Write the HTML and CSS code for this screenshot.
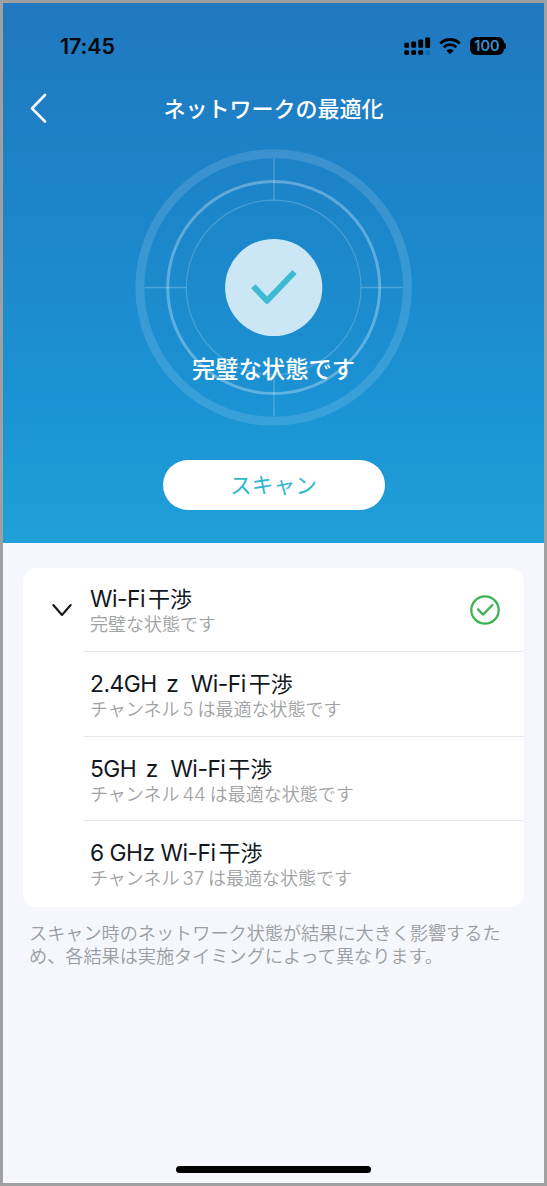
FILE: index.html
```html
<!DOCTYPE html>
<html lang="ja">
<head>
<meta charset="utf-8">
<meta name="viewport" content="width=device-width, initial-scale=1">
<title>ネットワークの最適化</title>
<link rel="stylesheet" href="styles.css">
</head>
<body>
<main class="screen">
  <section class="hero">
    <div class="statusbar">
      <span class="time">17:45</span>
      <div class="indicators">
        <svg class="signal" width="27" height="19" viewBox="0 0 27 19">
          <rect x="0.3" y="5.8" width="4.8" height="5" rx="1.2"/>
          <rect x="7.3" y="4.4" width="4.8" height="6.4" rx="1.2"/>
          <rect x="14.3" y="2.4" width="4.8" height="8.4" rx="1.2"/>
          <rect x="21.3" y="0.4" width="4.8" height="10.6" rx="1.2"/>
          <rect x="0.3" y="13.2" width="4.8" height="4.8" rx="1.4"/>
          <rect x="7.3" y="13.2" width="4.8" height="4.8" rx="1.4"/>
          <rect x="14.3" y="13.2" width="4.8" height="4.8" rx="1.4"/>
          <rect class="signal-off" x="21.3" y="13.2" width="4.8" height="4.8" rx="1.4"/>
        </svg>
        <svg class="wifi" width="22" height="18" viewBox="0 0 22 18">
          <path class="wifi-arc" d="M1.300 6.400A14 14 0 0 1 20.700 6.400M4.700 10.200A9.200 9.200 0 0 1 17.300 10.200"/>
          <path d="M11 17.200L7.300 13.400Q11 10.400 14.700 13.400Z"/>
        </svg>
        <div class="battery"><span class="level">100</span><span class="tip"></span></div>
      </div>
    </div>
    <header class="titlebar">
      <svg class="back" width="18" height="30" viewBox="0 0 18 30"><path d="M15 2L2 15.300L15 28.500"/></svg>
      <h1 class="title">ネットワークの最適化</h1>
    </header>
    <div class="radar">
      <svg class="rings" width="278" height="278" viewBox="0.3 0.5 278 278">
        <circle class="ring-outer" cx="139" cy="139" r="133.8"/>
        <circle class="ring-middle" cx="139" cy="139" r="106"/>
        <circle class="ring-inner" cx="139" cy="139" r="87.3"/>
        <path class="axis-v" d="M139.300 10V52M139.300 226V268"/>
        <path class="axis-h" d="M10 139H51.500M226.500 139H268"/>
        <circle class="disc" cx="139" cy="139" r="48.600"/>
        <path class="disc-check" d="M118.700 137.800L132.300 152.300L159.800 123.500"/>
      </svg>
      <p class="state">完璧な状態です</p>
    </div>
    <button class="scan" type="button">スキャン</button>
  </section>
  <section class="card">
    <div class="row row-head">
      <svg class="chevron" width="20" height="14" viewBox="0 0 20 14"><path d="M1.300 2L10 12L18.700 2"/></svg>
      <div class="body">
        <div class="name"><span>Wi-Fi</span><span class="kanji">干渉</span></div>
        <div class="detail">完璧な状態です</div>
      </div>
      <svg class="ok" width="30" height="30" viewBox="0 0 30 30"><circle cx="15" cy="15" r="13.700"/><path d="M8 14.400L13 19.600L22.400 10"/></svg>
    </div>
    <div class="row">
      <div class="body">
        <div class="name"><span>2.4GH</span><span class="unit">z</span><span>Wi-Fi</span><span class="kanji">干渉</span></div>
        <div class="detail">チャンネル<span class="num">5</span>は最適な状態です</div>
      </div>
    </div>
    <div class="row">
      <div class="body">
        <div class="name"><span>5GH</span><span class="unit">z</span><span>Wi-Fi</span><span class="kanji">干渉</span></div>
        <div class="detail">チャンネル<span class="num">44</span>は最適な状態です</div>
      </div>
    </div>
    <div class="row">
      <div class="body">
        <div class="name"><span>6 GHz Wi-Fi</span><span class="kanji">干渉</span></div>
        <div class="detail">チャンネル<span class="num">37</span>は最適な状態です</div>
      </div>
    </div>
  </section>
  <p class="note">スキャン時のネットワーク状態が結果に大きく影響するため、各結果は実施タイミングによって異なります。</p>
  <div class="home"></div>
</main>
</body>
</html>
```
FILE: styles.css
```css
* { box-sizing: border-box; margin: 0; padding: 0; }
body {
  font-family: Inter, "Noto Sans CJK JP", sans-serif;
  background: #f5f7fb;
}
svg { display: block; fill: none; flex: none; }
.screen {
  width: 547px;
  height: 1186px;
  border: 3px solid #a0a0a0;
  background: #f5f7fc;
  display: flex;
  flex-direction: column;
  overflow: hidden;
}
.hero {
  height: 540px;
  flex: none;
  display: flex;
  flex-direction: column;
  align-items: center;
  background: linear-gradient(#2078c0, #1c86ca 40%, #1b93d4 75%, #20a0d9);
}
.statusbar {
  width: 100%;
  height: 86px;
  padding: 0 38px 0 57px;
  display: flex;
  align-items: center;
  justify-content: space-between;
}
.time { font-size: 21.5px; font-weight: 600; letter-spacing: -0.1px; color: #05080c; }
.indicators { display: flex; align-items: center; height: 19px; }
.signal, .wifi { fill: #000; }
.signal-off { fill: #0869b5; }
.wifi { margin: 0 9px 0 8px; }
.wifi-arc { fill: none; stroke: #000; stroke-width: 2.8; }
.battery { display: flex; align-items: center; gap: 0; }
.level {
  width: 34px;
  height: 18px;
  border-radius: 6px;
  background: #000;
  color: #3a8fd0;
  font-size: 14.5px;
  font-weight: 600;
  line-height: 18px;
  text-align: center;
}
.tip { width: 2px; height: 6px; border-radius: 0 3px 3px 0; background: #000; }
.titlebar {
  width: 100%;
  height: 38px;
  display: grid;
  grid-template-columns: 46px 1fr 46px;
  align-items: center;
}
.back { margin-left: 27px; stroke: #fff; stroke-width: 2.6; stroke-linecap: round; stroke-linejoin: round; }
.title {
  font: 500 22px/32px "Noto Sans CJK JP", sans-serif;
  color: #fff;
  text-align: center;
  padding-bottom: 3px;
}
.radar { display: grid; width: 278px; height: 278px; margin-top: 22px; }
.rings, .state { grid-area: 1 / 1; }
.ring-outer { stroke: rgba(255, 255, 255, .13); stroke-width: 9; }
.ring-middle { stroke: rgba(255, 255, 255, .3); stroke-width: 3; }
.ring-inner { stroke: rgba(255, 255, 255, .2); stroke-width: 1.2; }
.axis-v { stroke: rgba(255, 255, 255, .15); stroke-width: 2; }
.axis-h { stroke: rgba(255, 255, 255, .22); stroke-width: 1.4; }
.disc { fill: #cbe7f5; }
.disc-check { stroke: #3ebbd3; stroke-width: 6; stroke-linejoin: round; }
.state {
  font: 500 23.3px/34px "Noto Sans CJK JP", sans-serif;
  color: #fff;
  text-align: center;
  padding-top: 202px;
}
.scan {
  width: 222px;
  height: 50px;
  margin-top: 32.5px;
  border: 0;
  border-radius: 25px;
  background: #fff;
  color: #31b6cf;
  font: 400 21.7px/48px "Noto Sans CJK JP", sans-serif;
  padding-bottom: 2px;
}
.card {
  width: 501px;
  height: 339px;
  flex: none;
  margin: 25px 0 0 20px;
  border-radius: 14px;
  background: #fff;
  display: grid;
  grid-template-rows: 84px 85px 84px 86px;
}
.row { display: grid; grid-template-columns: 61px 1fr 54px; align-items: center; }
.body {
  grid-column: 2 / 4;
  grid-row: 1;
  align-self: stretch;
  border-bottom: 1px solid #e6e7e9;
  padding: 16px 0 0 6px;
}
.row-head .body { padding-top: 15px; }
.row:last-child .body { border-bottom: 0; }
.chevron { grid-row: 1; margin-left: 29px; stroke: #12181e; stroke-width: 2.1; stroke-linecap: round; stroke-linejoin: round; }
.ok { grid-column: 3; grid-row: 1; stroke: #3cb454; stroke-width: 2.3; stroke-linecap: round; stroke-linejoin: round; }
.name {
  display: flex;
  align-items: baseline;
  height: 29px;
  font-size: 22.8px;
  letter-spacing: -0.5px;
  line-height: 28px;
  color: #12181e;
  white-space: pre;
}
.unit { margin: 0 12.5px 0 9.5px; }
.kanji { font: 400 22px/28px "Noto Sans CJK JP", sans-serif; letter-spacing: 0; margin-left: 3px; }
.detail {
  font: 350 18px/23px "Noto Sans CJK JP", sans-serif;
  color: #a0a2a4;
  white-space: nowrap;
}
.num { font-family: Inter, sans-serif; font-size: 18.5px; line-height: 1; margin: 0 4px 0 3px; }
.note {
  width: 480px;
  margin: 14px 0 0 26px;
  font: 350 18.15px/23px "Noto Sans CJK JP", sans-serif;
  color: #9b9da1;
}
.home { width: 195px; height: 7px; border-radius: 4px; background: #000; margin: auto auto 10px 173px; flex: none; }
```
